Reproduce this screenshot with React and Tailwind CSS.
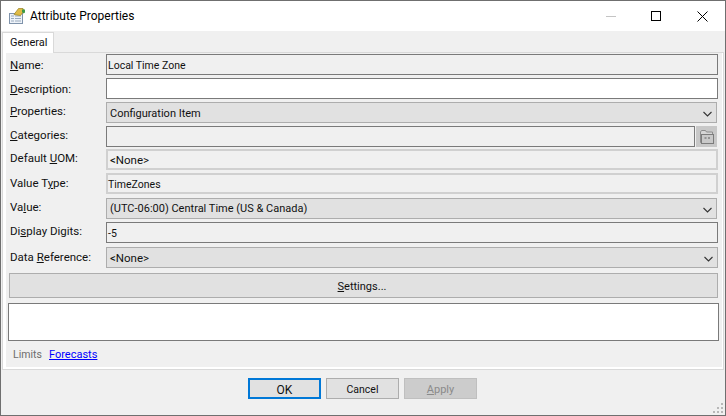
import React from "react";

const font = "font-['Roboto','Liberation_Sans',sans-serif]";

const Label = ({ pre, u, post, className = "" }) => (
  <div className={`w-[100px] shrink-0 pl-[4px] text-[11.5px] leading-[16px] text-[#111] ${className}`}>
    {pre}
    <u>{u}</u>
    {post}
  </div>
);

const Row = ({ label, labelClass, className = "", children }) => (
  <div className={`flex h-[21px] items-start ${className}`}>
    <Label {...label} className={labelClass} />
    {children}
  </div>
);

const ReadOnly = ({ children }) => (
  <div className="flex h-[21px] w-[612px] items-center border border-[#7a7a7a] bg-[#f0f0f0] pl-[1px] pt-[2px] text-[10.5px] text-[#111]">
    {children}
  </div>
);

const Disabled = ({ children, className = "text-[10.5px]" }) => (
  <div className={`flex h-[21px] w-[612px] items-center border-2 border-[#d0d0d0] bg-[#f0f0f0] pt-[2px] text-[#111] ${className}`}>
    {children}
  </div>
);

const Chevron = () => (
  <svg width="9" height="6" viewBox="0 0 9 6" className="shrink-0">
    <path d="M0.500 1l4 4 4-4" fill="none" stroke="#333" strokeWidth="1.1" />
  </svg>
);

const Combo = ({ children, wide, className = "text-[11px] pt-[2px]" }) => (
  <div
    className={`flex h-[21px] items-center justify-between border border-[#adadad] bg-[#e1e1e1] pl-[3px] pr-[4px] text-[#111] ${className} ${
      wide ? "w-[612px]" : "w-[611px]"
    }`}
  >
    <span>{children}</span>
    <Chevron />
  </div>
);

const PropsIcon = () => (
  <svg width="17" height="16" viewBox="0 0 17 16" className="mr-[4px] shrink-0">
    <rect x="0.500" y="5.500" width="13" height="10" fill="#eef3f9" stroke="#7f93ab" />
    <path d="M2 8h3M6 8h6M2 10.500h3M6 10.500h6M2 13h3M6 13h6" stroke="#9aaabd" />
    <path d="M5 6.500 9.500 0.500h4.500l1 2.500-3.500 4.500-4-0.500z" fill="#e0bb46" stroke="#96801f" strokeWidth="0.7" />
    <path d="M13 1.500h3v3l-1.500 1-1.500-1.500z" fill="#3f9a46" />
  </svg>
);

const FolderIcon = () => (
  <svg width="14" height="14" viewBox="0 0 14 14">
    <path d="M0.500 12.500V2l1-1.500h4l1 1.500h6v10.500z" fill="#d6d6d6" stroke="#8c8c8c" />
    <rect x="1.500" y="4.500" width="12" height="9" fill="#c9c9c9" stroke="#7c7c7c" />
    <path d="M4.500 8h2M8 8h2" stroke="#5f5f5f" />
  </svg>
);

const CloseIcon = () => (
  <svg width="11" height="11" viewBox="0 0 11 11" className="mr-[17px]">
    <path d="M0.500 0.500l10 10M10.500 0.500l-10 10" stroke="#000" strokeWidth="1" />
  </svg>
);

const Grip = () => (
  <svg width="12" height="12" viewBox="0 0 12 12" className="absolute bottom-[1px] right-[1px]">
    <path d="M9 1h2v2H9zM5 5h2v2H5zM9 5h2v2H9zM1 9h2v2H1zM5 9h2v2H5zM9 9h2v2H9z" fill="#b8b8b8" />
  </svg>
);

export default function App() {
  return (
    <div className={`relative flex h-[416px] w-[726px] flex-col border border-[#6f6f6f] bg-[#f0f0f0] ${font}`}>
      {/* title bar */}
      <div className="flex h-[30px] shrink-0 items-center bg-white pl-[8px]">
        <PropsIcon />
        <span className="text-[12px] text-black">Attribute Properties</span>
        <div className="ml-auto flex items-center">
          <div className="mr-[35px] h-[1px] w-[10px] bg-[#c4c4c4]" />
          <div className="mr-[36px] h-[10px] w-[10px] border border-black" />
          <CloseIcon />
        </div>
      </div>

      {/* tab strip */}
      <div className="relative z-10 -mb-[1px] ml-[1px] mt-[1px] flex h-[21px] shrink-0">
        <div className="w-[52px] border-x border-t border-[#d9d9d9] bg-white pl-[7px] text-[11px] leading-[20px] text-[#111]">
          General
        </div>
      </div>

      {/* tab page */}
      <div className="mx-[1px] h-[318px] shrink-0 border border-[#d9d9d9] bg-white pb-[2px] pl-[3px] pr-[1px]">
        <div className="h-full bg-[#f0f0f0] pt-[1px]">
          <Row label={{ u: "N", post: "ame:" }} labelClass="pt-[3px]">
            <ReadOnly>Local Time Zone</ReadOnly>
          </Row>
          <Row label={{ u: "D", post: "escription:" }} labelClass="pt-[3px]" className="mt-[3px]">
            <div className="h-[21px] w-[612px] border border-[#7a7a7a] bg-white" />
          </Row>
          <Row label={{ u: "P", post: "roperties:" }} labelClass="pt-[1px]" className="mt-[3px]">
            <Combo className="text-[11px] pt-[3px]">Configuration Item</Combo>
          </Row>
          <Row label={{ u: "C", post: "ategories:" }} labelClass="pt-[1px]" className="mt-[3px]">
            <div className="h-[21px] w-[589px] border border-[#7a7a7a] bg-[#f0f0f0]" />
            <div className="ml-[1px] flex h-[21px] w-[21px] items-center justify-center bg-[#c8c8c8]">
              <FolderIcon />
            </div>
          </Row>
          <Row label={{ pre: "Default ", u: "U", post: "OM:" }} labelClass="pt-[1px]" className="mt-[2px]">
            <Disabled className="pl-[2px] text-[11.5px]">&lt;None&gt;</Disabled>
          </Row>
          <Row label={{ pre: "Value T", u: "y", post: "pe:" }} labelClass="pt-[2px]" className="mt-[3px]">
            <Disabled>TimeZones</Disabled>
          </Row>
          <Row label={{ pre: "Va", u: "l", post: "ue:" }} labelClass="pt-[1px]" className="mt-[4px]">
            <Combo>(UTC-06:00) Central Time (US &amp; Canada)</Combo>
          </Row>
          <Row label={{ pre: "Di", u: "s", post: "play Digits:" }} labelClass="pt-[1px]" className="mt-[3px]">
            <ReadOnly>-5</ReadOnly>
          </Row>
          <Row label={{ pre: "Data ", u: "R", post: "eference:" }} labelClass="pt-[2px]" className="mt-[4px]">
            <Combo wide className="text-[11.5px] pt-[2px]">&lt;None&gt;</Combo>
          </Row>

          <div className="ml-[3px] mt-[5px] flex h-[25px] w-[709px] items-center justify-center border border-[#adadad] bg-[#e1e1e1] pr-[3px] pt-[3px] text-[11px] text-[#111]">
            <span>
              <u>S</u>ettings...
            </span>
          </div>
          <div className="ml-[2px] mt-[5px] h-[38px] w-[711px] border border-[#7a7a7a] bg-white" />
          <div className="ml-[7px] mt-[6px] flex text-[11px] leading-[16px]">
            <span className="w-[36px] text-[10.5px] text-[#6d6d6d]">Limits</span>
            <span className="text-[#0000ff] underline">Forecasts</span>
          </div>
        </div>
      </div>

      {/* footer buttons */}
      <div className="ml-[247px] mt-[8px] flex gap-[5px] text-[11px]">
        <div className="flex h-[21px] w-[73px] items-center justify-center border-2 border-[#0078d7] bg-[#e1e1e1] pt-[2px] text-[12px] text-[#111]">OK</div>
        <div className="flex h-[21px] w-[73px] items-center justify-center border border-[#adadad] bg-[#e1e1e1] pt-[3px] text-[10.5px] text-[#111]">Cancel</div>
        <div className="flex h-[21px] w-[73px] items-center justify-center border border-[#bfbfbf] bg-[#cccccc] pt-[3px] text-[#8a8a8a]">
          <span>
            <u>A</u>pply
          </span>
        </div>
      </div>
      <Grip />
    </div>
  );
}
